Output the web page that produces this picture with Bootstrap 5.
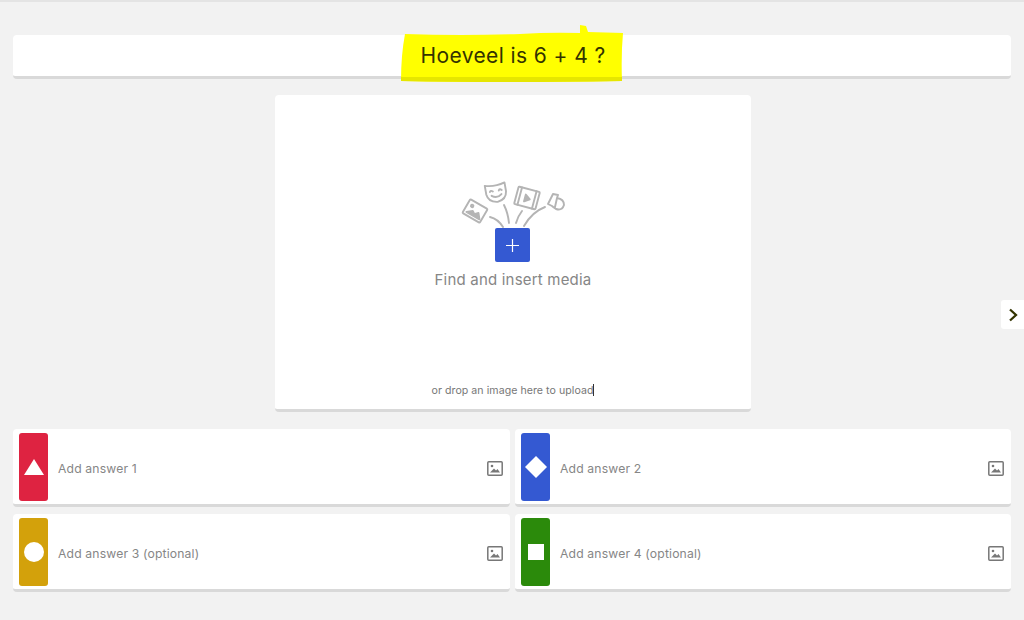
<!DOCTYPE html>
<html lang="en">
<head>
    <meta charset="UTF-8">
    <title>Quiz editor</title>
    <link rel="stylesheet" href="https://cdn.jsdelivr.net/npm/bootstrap@5.3.0/dist/css/bootstrap.min.css">
    <style>
        html, body { height: 620px; overflow: hidden; }
        body { background: #f2f2f2; font-family: "Inter", "Open Sans", sans-serif; border-top: 2px solid #e4e4e4; padding: 33px 13px 0; position: relative; }
        .panel { background: #fff; border-radius: 4px; border-bottom: 3px solid #d9d9d9; }
        .title-bar { height: 44px; position: relative; }
        .title-text { position: relative; left: 1px; font-size: 21px; color: #333300; line-height: 42px; letter-spacing: .4px; }
        .scribble { position: absolute; left: 387px; top: -10px; width: 226px; height: 58px; }
        .media-box { width: 476px; height: 317px; margin: 16px 0 17px 262px; padding-top: 83px; }
        .media-art { width: 110px; height: 52px; display: block; }
        .add-tile { width: 35px; height: 34px; background: #3459d2; border-radius: 2px; margin: -2px 1px 0 0; }
        .media-label { color: #868686; font-size: 15px; margin-top: 8px; line-height: 20px; letter-spacing: .2px; }
        .drop-hint { color: #777; font-size: 10.6px; margin-top: auto; margin-bottom: 11px; line-height: 14px; letter-spacing: .05px; }
        .caret-line { display: inline-block; width: 1px; height: 12px; background: #333; vertical-align: -2px; }
        .answers { display: grid; grid-template-columns: 497px 496px; column-gap: 5px; row-gap: 7px; }
        .answer { height: 78px; padding: 4px 6px 3px; }
        .chip { width: 29px; height: 68px; border-radius: 3px; }
        .chip-red { background: #de2341; }
        .chip-blue { background: #3459d2; }
        .chip-gold { background: #d3a10b; }
        .chip-green { background: #2b8a0b; }
        .answer-text { color: #868686; font-size: 12.2px; margin: 4px 0 0 10px; letter-spacing: .15px; }
        .pic-icon { width: 16px; height: 15px; margin: 3px 1px 0 0; display: block; }
        .side-tab { position: absolute; right: 0; top: 298px; width: 23px; height: 29px; background: #fff; border-radius: 3px 0 0 3px; }
    </style>
</head>
<body>
    <div class="panel title-bar text-center">
        <svg class="scribble" viewBox="0 0 226 58">
            <path d="M5 9 Q60 11 120 9 Q150 7 180 8 L180 0 L186 1 L188 7 L223 8 Q221 30 222 56 Q100 58 1 56 Q1 30 5 9 Z" fill="#ffff00"/>
            <path d="M1 52 L222 52 L222 56 Q100 58 1 56 Z" fill="#e6e600"/>
        </svg>
        <span class="title-text">Hoeveel is 6 + 4 ?</span>
    </div>

    <div class="panel media-box d-flex flex-column align-items-center">
        <svg class="media-art" viewBox="458 178 110 52" fill="none" stroke="#b4b4b4" stroke-width="1.9" stroke-linecap="round" stroke-linejoin="round">
            <path d="M490 217 Q498 219 503 227 M504 205 Q508 213 509 223 M522 211 Q518 216 516 223 M545 207 Q532 212 524 226"/>
            <g transform="rotate(30 475 211)">
                <rect x="465" y="203" width="20" height="16" rx="1"/>
                <circle cx="470" cy="208" r="1.2"/>
                <path d="M468 216 L473 212 L476 214 L479 211 L483 216 Z" fill="#b4b4b4"/>
            </g>
            <g transform="rotate(-10 496 192)">
                <path d="M486 184 Q496 187 506 184 L506 193 Q505 201 496 202 Q487 201 486 193 Z"/>
                <path d="M490 191 Q491 189 493 191 M499 191 Q500 189 502 191 M491 195 Q496 199 501 195"/>
            </g>
            <g transform="rotate(15 527 198)">
                <rect x="516" y="189" width="22" height="18" rx="1"/>
                <path d="M519.5 189 V207 M534.5 189 V207"/>
                <path d="M525 195 L530 198.5 L525 202 Z" fill="#b4b4b4"/>
            </g>
            <path d="M548 204 L553 194 L558 195 L557 198 Q564 199 564 205 Q562 211 556 209 Q553 207 552 206 Z M557 198 L555 207"/>
        </svg>
        <div class="add-tile d-flex align-items-center justify-content-center">
            <svg width="13" height="13" viewBox="0 0 13 13"><path d="M6.5 0 V13 M0 6.5 H13" stroke="#fff" stroke-width="1.2"/></svg>
        </div>
        <div class="media-label">Find and insert media</div>
        <div class="drop-hint">or drop an image here to upload<span class="caret-line"></span></div>
    </div>

    <div class="answers">
        <div class="panel answer d-flex align-items-center">
            <div class="chip chip-red d-flex align-items-center justify-content-center">
                <svg width="20" height="16" viewBox="0 0 20 16"><path d="M10 0 L20 16 H0 Z" fill="#fff"/></svg>
            </div>
            <span class="answer-text flex-grow-1">Add answer 1</span>
            <svg class="pic-icon" viewBox="0 0 16 15" fill="none"><rect x=".8" y=".8" width="14.4" height="13.4" rx="1" stroke="#777" stroke-width="1.5"/><circle cx="5" cy="5" r="1.3" fill="#777"/><path d="M3 11.5 L7 7.5 L9 9.5 L10.5 8 L13 11.5 Z" fill="#777"/></svg>
        </div>
        <div class="panel answer d-flex align-items-center">
            <div class="chip chip-blue d-flex align-items-center justify-content-center">
                <svg width="22" height="22" viewBox="0 0 22 22"><path d="M11 0 L22 11 L11 22 L0 11 Z" fill="#fff"/></svg>
            </div>
            <span class="answer-text flex-grow-1">Add answer 2</span>
            <svg class="pic-icon" viewBox="0 0 16 15" fill="none"><rect x=".8" y=".8" width="14.4" height="13.4" rx="1" stroke="#777" stroke-width="1.5"/><circle cx="5" cy="5" r="1.3" fill="#777"/><path d="M3 11.5 L7 7.5 L9 9.5 L10.5 8 L13 11.5 Z" fill="#777"/></svg>
        </div>
        <div class="panel answer d-flex align-items-center">
            <div class="chip chip-gold d-flex align-items-center justify-content-center">
                <svg width="20" height="20" viewBox="0 0 20 20"><circle cx="10" cy="10" r="10" fill="#fff"/></svg>
            </div>
            <span class="answer-text flex-grow-1">Add answer 3 (optional)</span>
            <svg class="pic-icon" viewBox="0 0 16 15" fill="none"><rect x=".8" y=".8" width="14.4" height="13.4" rx="1" stroke="#777" stroke-width="1.5"/><circle cx="5" cy="5" r="1.3" fill="#777"/><path d="M3 11.5 L7 7.5 L9 9.5 L10.5 8 L13 11.5 Z" fill="#777"/></svg>
        </div>
        <div class="panel answer d-flex align-items-center">
            <div class="chip chip-green d-flex align-items-center justify-content-center">
                <svg width="16" height="16" viewBox="0 0 16 16"><rect width="16" height="16" fill="#fff"/></svg>
            </div>
            <span class="answer-text flex-grow-1">Add answer 4 (optional)</span>
            <svg class="pic-icon" viewBox="0 0 16 15" fill="none"><rect x=".8" y=".8" width="14.4" height="13.4" rx="1" stroke="#777" stroke-width="1.5"/><circle cx="5" cy="5" r="1.3" fill="#777"/><path d="M3 11.5 L7 7.5 L9 9.5 L10.5 8 L13 11.5 Z" fill="#777"/></svg>
        </div>
    </div>

    <div class="side-tab d-flex align-items-center justify-content-center">
        <svg width="10" height="14" viewBox="0 0 10 14" fill="none"><path d="M2 1.5 L8 7 L2 12.5" stroke="#333300" stroke-width="2.3"/></svg>
    </div>

    <script src="https://cdn.jsdelivr.net/npm/bootstrap@5.3.0/dist/js/bootstrap.bundle.min.js"></script>
</body>
</html>
